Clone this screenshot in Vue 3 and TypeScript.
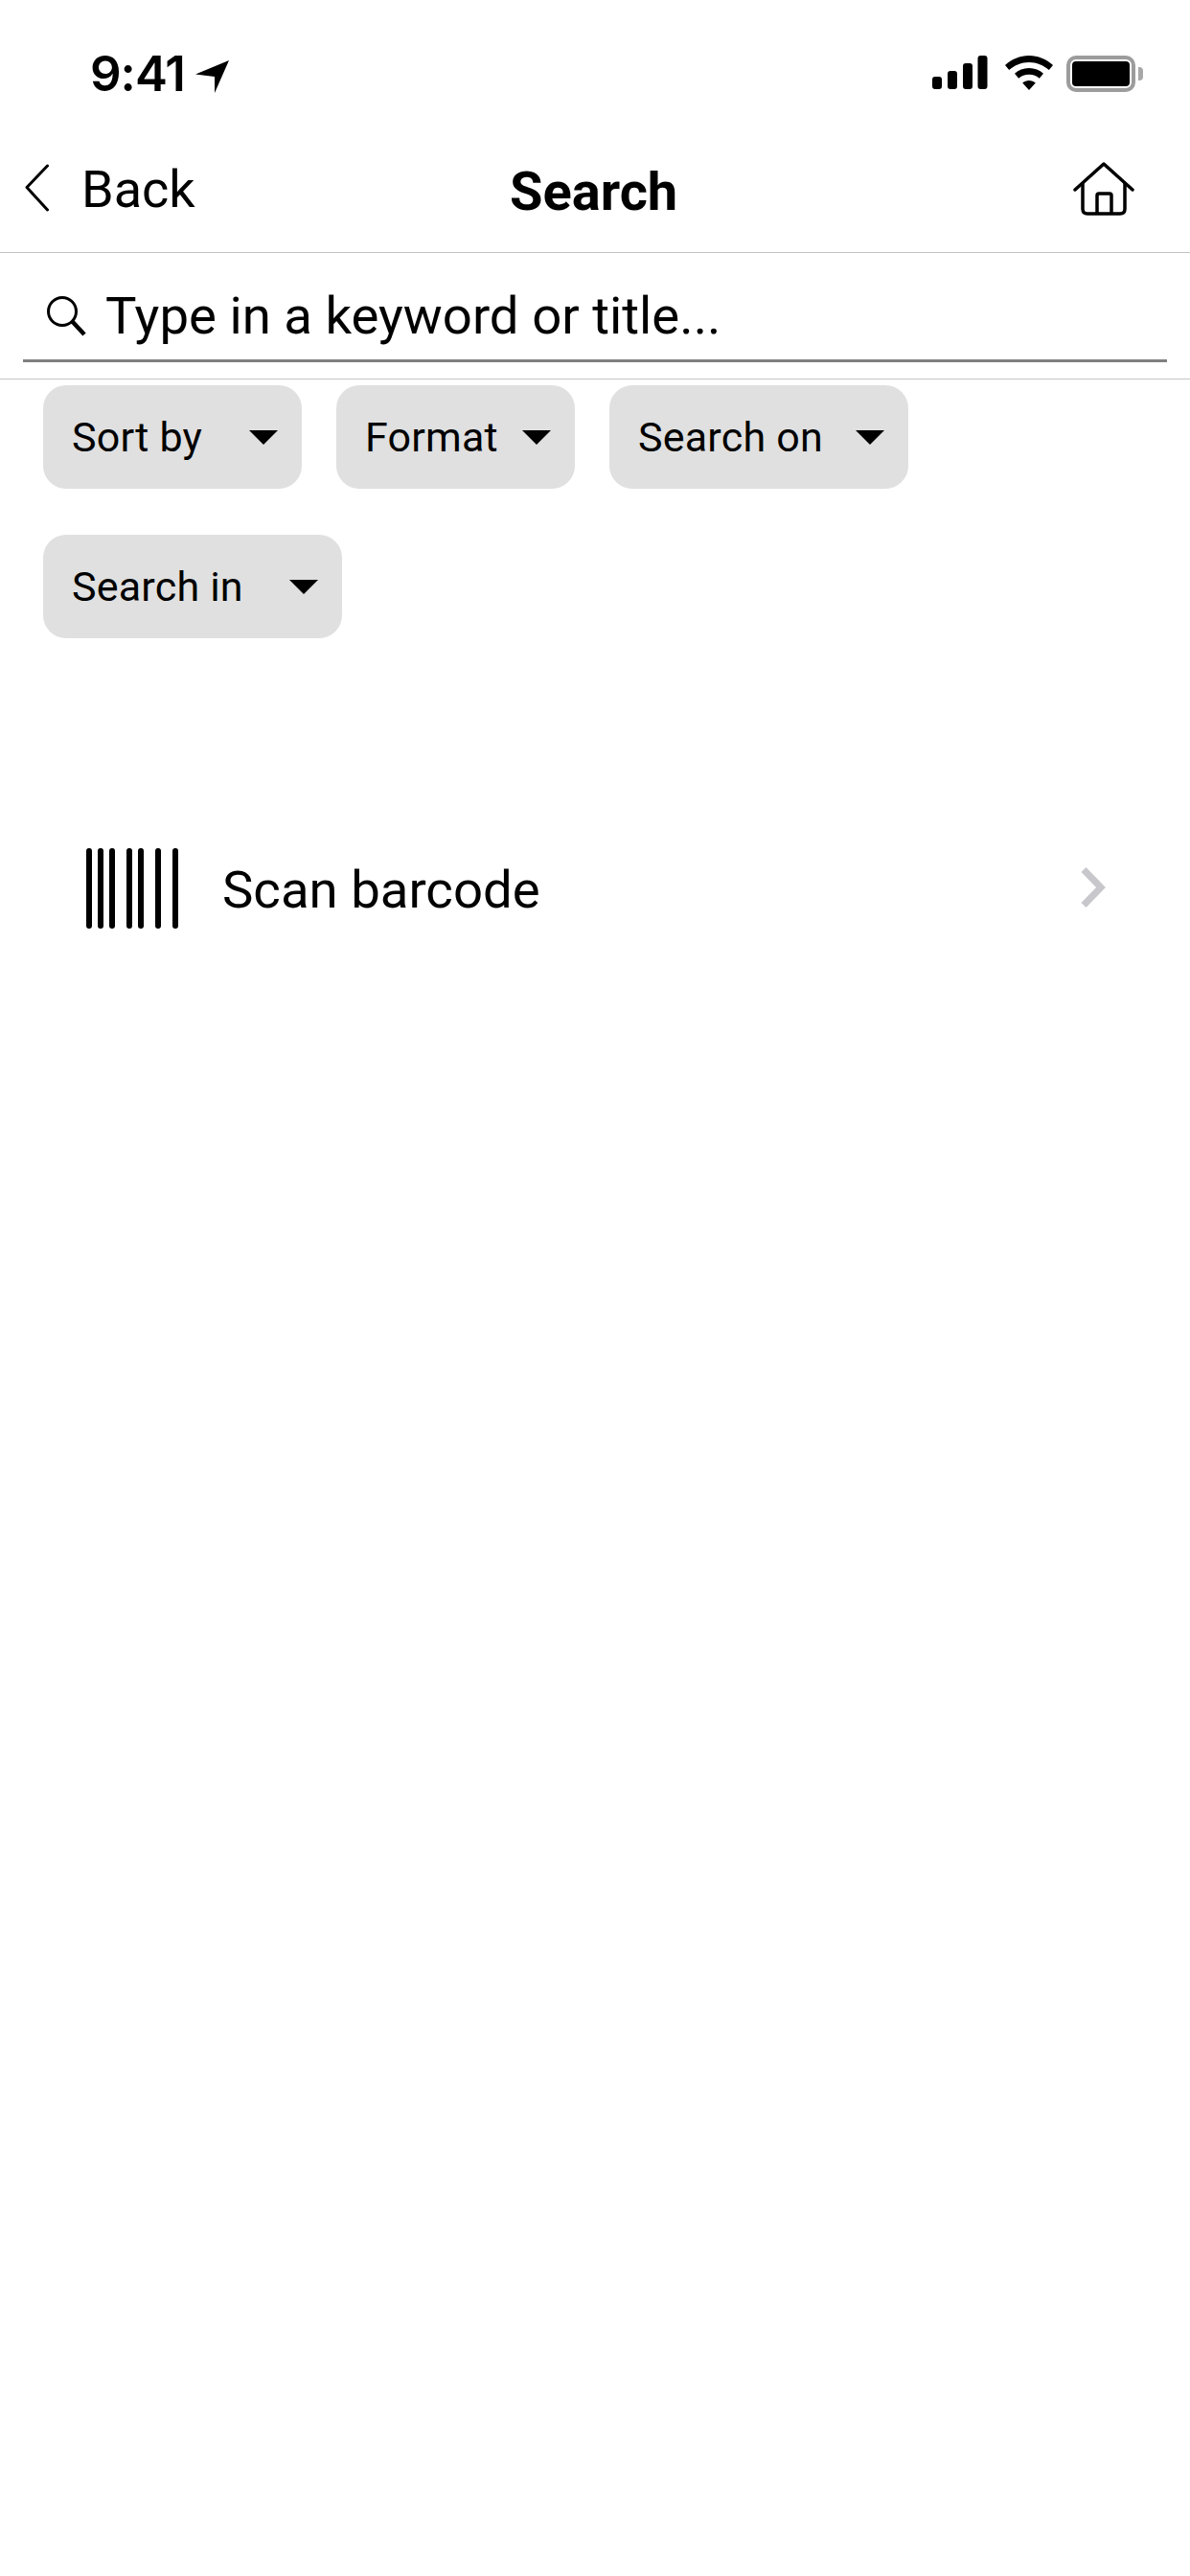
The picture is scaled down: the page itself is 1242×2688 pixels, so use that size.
<script setup lang="ts">
type Filter = { label: string; width: number };

const filterRows: Filter[][] = [
  [
    { label: "Sort by", width: 270 },
    { label: "Format", width: 249 },
    { label: "Search on", width: 312 },
  ],
  [{ label: "Search in", width: 312 }],
];

const barX = [90, 102, 114, 132, 144, 162, 180];
</script>

<template>
  <div class="screen">
    <header class="status">
      <div class="clock">
        <span class="time">9:41</span>
        <svg class="arrow" width="36" height="36" viewBox="0 0 36 36">
          <path d="M35 1 L0 15.500 L20 18 L20 35 Z" fill="#000" />
        </svg>
      </div>
      <div class="indicators">
        <svg width="58" height="35" viewBox="0 0 58 35">
          <rect x="0" y="22" width="10" height="13" rx="3" />
          <rect x="16" y="16" width="10" height="19" rx="3" />
          <rect x="32" y="8" width="10" height="27" rx="3" />
          <rect x="47.500" y="0" width="10" height="35" rx="3" />
        </svg>
        <svg class="wifi" width="50" height="36" viewBox="0 0 50 36">
          <path d="M25 0 C34.500 0 43 3.700 50 10 L45.800 15 C40 10 33 7 25 7 C17 7 10 10 4.200 15 L0 10 C7 3.700 15.500 0 25 0 Z" />
          <path d="M25 13 C30.800 13 36 15.200 40 18.800 L35.800 23.800 C33 21.300 29.200 19.800 25 19.800 C20.800 19.800 17 21.300 14.200 23.800 L10 18.800 C14 15.200 19.200 13 25 13 Z" />
          <path d="M25 26 C27.600 26 30 27 31.800 28.500 L25 36 L18.200 28.500 C20 27 22.400 26 25 26 Z" />
        </svg>
        <div class="battery">
          <div class="battery-body"><div class="battery-level"></div></div>
          <div class="battery-nub"></div>
        </div>
      </div>
    </header>

    <nav class="nav">
      <div class="back">
        <svg width="25" height="50" viewBox="0 0 25 50" fill="none">
          <path d="M23.500 2 L2 24.500 L23.500 48" stroke="#000" stroke-width="3" stroke-linecap="round" stroke-linejoin="round" />
        </svg>
        <span class="back-label">Back</span>
      </div>
      <h1 class="title">Search</h1>
      <svg class="home" width="64" height="56" viewBox="0 0 64 56" fill="none" stroke="#000" stroke-width="3.500" stroke-linejoin="round">
        <path d="M2 29 L32 2 L62 29" stroke-linecap="round" />
        <path d="M10 22 V49 Q10 54 15 54 H49 Q54 54 54 49 V22" />
        <path d="M25 54 V35 Q25 33 27 33 H38 Q40 33 40 35 V54" />
      </svg>
    </nav>

    <div class="search">
      <div class="field">
        <svg width="44" height="44" viewBox="0 0 44 44" fill="none" stroke="#000">
          <circle cx="18" cy="18" r="14.500" stroke-width="3" />
          <path d="M28.500 28.500 L41 42" stroke-width="4.500" />
        </svg>
        <span class="placeholder">Type in a keyword or title...</span>
      </div>
    </div>

    <div class="filters">
      <div v-for="(row, i) in filterRows" :key="i" class="filter-row">
        <div
          v-for="filter in row"
          :key="filter.label"
          class="chip"
          :style="{ width: `${filter.width}px` }"
        >
          <span>{{ filter.label }}</span>
          <i class="caret"></i>
        </div>
      </div>
    </div>

    <div class="scan">
      <svg class="barcode" width="96" height="84" viewBox="0 0 96 84">
        <rect
          v-for="x in barX"
          :key="x"
          :x="x - 90"
          y="0"
          width="6"
          height="84"
          rx="3"
        />
      </svg>
      <span class="scan-label">Scan barcode</span>
      <svg class="chevron" width="26" height="42" viewBox="0 0 26 42" fill="none">
        <path d="M3 2.500 L21 21 L3 39.500" stroke="#c7c7cc" stroke-width="7" />
      </svg>
    </div>
  </div>
</template>

<style>
html,
body {
  margin: 0;
  background: #fff;
}
</style>

<style scoped>
.screen {
  width: 1242px;
  height: 2688px;
  overflow: hidden;
  background: #fff;
  color: #000;
  font-family: Roboto, "Liberation Sans", sans-serif;
}

.status {
  display: flex;
  justify-content: space-between;
  box-sizing: border-box;
  height: 132px;
  padding: 58px 49px 0 94px;
}

.clock {
  display: flex;
  align-items: flex-start;
  gap: 11px;
}

.time {
  font-family: Inter, sans-serif;
  font-size: 51px;
  font-weight: 600;
  line-height: 38px;
  letter-spacing: -1px;
}

.arrow {
  margin-top: 4px;
}

.indicators {
  display: flex;
  align-items: flex-start;
  gap: 18px;
}

.wifi {
  margin-right: -2px;
}

.battery {
  display: flex;
  align-items: center;
  gap: 3px;
  margin-left: -2px;
}

.battery-body {
  box-sizing: border-box;
  width: 72px;
  height: 38px;
  padding: 2px;
  border: 4px solid #9c9c9c;
  border-radius: 10px;
}

.battery-level {
  height: 100%;
  border-radius: 4px;
  background: #000;
}

.battery-nub {
  width: 5px;
  height: 14px;
  border-radius: 0 4px 4px 0;
  background: #a8a8a8;
}

.nav {
  position: relative;
  display: flex;
  justify-content: space-between;
  align-items: flex-start;
  box-sizing: border-box;
  height: 132px;
  padding: 37px 58px 0 26px;
  border-bottom: 1px solid #c4c4c4;
}

.back {
  display: flex;
  align-items: center;
  gap: 34px;
  height: 54px;
  font-size: 54px;
  line-height: 54px;
}

.back-label {
  padding-top: 3px;
}

.title {
  position: absolute;
  top: 39px;
  left: 532px;
  margin: 0;
  font-size: 56px;
  font-weight: 700;
  line-height: 58px;
}

.search {
  box-sizing: border-box;
  height: 132px;
  padding: 0 24px;
  border-bottom: 1px solid #c4c4c4;
}

.field {
  display: flex;
  align-items: center;
  gap: 19px;
  box-sizing: border-box;
  height: 114px;
  padding: 18px 0 0 23px;
  border-bottom: 3px solid #808080;
}

.placeholder {
  font-size: 54.500px;
}

.filters {
  display: flex;
  flex-direction: column;
  gap: 48px;
  padding: 6px 0 0 45px;
}

.filter-row {
  display: flex;
  gap: 36px;
}

.chip {
  display: flex;
  justify-content: space-between;
  align-items: center;
  box-sizing: border-box;
  height: 108px;
  padding: 0 25px 0 30px;
  border-radius: 24px;
  background: #e0e0e0;
  font-size: 43px;
  letter-spacing: 0.2px;
}

.caret {
  width: 0;
  height: 0;
  border-top: 15px solid #000;
  border-left: 15px solid transparent;
  border-right: 15px solid transparent;
}

.scan {
  display: flex;
  align-items: center;
  margin-top: 219px;
  padding: 0 88px 0 90px;
}

.barcode {
  flex: none;
}

.scan-label {
  margin: 2px 0 0 46px;
  font-size: 54.500px;
  line-height: 80px;
}

.chevron {
  margin: 0 0 3px auto;
}
</style>
